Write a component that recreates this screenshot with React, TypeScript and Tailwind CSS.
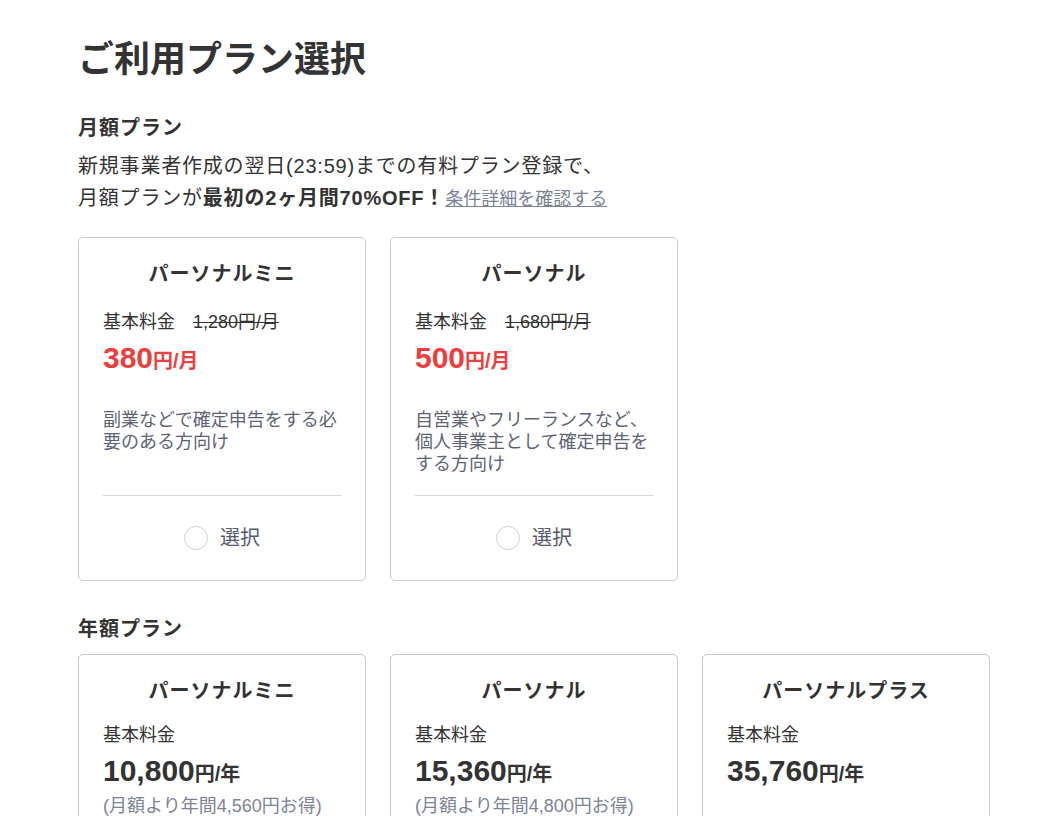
import React from 'react'

const font = { fontFamily: '"Liberation Sans", "Noto Sans CJK JP", sans-serif' }
const cjk = { fontFamily: '"Noto Sans CJK JP", sans-serif' }

interface MonthlyPlan {
  name: string
  original: string
  price: string
  description: string
}

interface YearlyPlan {
  name: string
  price: string
  saving?: string
}

const monthlyPlans: MonthlyPlan[] = [
  {
    name: 'パーソナルミニ',
    original: '1,280円/月',
    price: '380',
    description: '副業などで確定申告をする必要のある方向け'
  },
  {
    name: 'パーソナル',
    original: '1,680円/月',
    price: '500',
    description: '自営業やフリーランスなど、個人事業主として確定申告をする方向け'
  }
]

const yearlyPlans: YearlyPlan[] = [
  { name: 'パーソナルミニ', price: '10,800', saving: '(月額より年間4,560円お得)' },
  { name: 'パーソナル', price: '15,360', saving: '(月額より年間4,800円お得)' },
  { name: 'パーソナルプラス', price: '35,760' }
]

const SelectRow: React.FC = () => (
  <div className="mt-[22px] border-t border-[#d6d6de] pt-[29px] pb-[29px] flex items-center justify-center gap-3">
    <span className="w-6 h-6 rounded-full border-[1.5px] border-[#d0d1d9] bg-white" />
    <span className="text-[20px] leading-[26px] text-[#555b6e]">選択</span>
  </div>
)

const MonthlyCard: React.FC<{ plan: MonthlyPlan }> = ({ plan }) => (
  <div className="w-[288px] border border-[#c8c8d2] rounded-[5px] bg-white px-6 pt-6 flex flex-col">
    <h3 className="text-center text-[20px] leading-6 font-bold tracking-[1px] text-[#333]">{plan.name}</h3>
    <div className="mt-6 text-[18px] leading-6 text-[#333] flex">
      <span>基本料金</span>
      <span className="ml-[18px] line-through">{plan.original}</span>
    </div>
    <div className="mt-[6px] text-[#ee3d3d] font-bold leading-9">
      <span className="text-[30px]">{plan.price}</span>
      <span className="text-[20px]">円/月</span>
    </div>
    <p className="mt-[26px] flex-1 text-[18px] leading-[22px] text-[#5c6377]" style={cjk}>
      {plan.description}
    </p>
    <SelectRow />
  </div>
)

const YearlyCard: React.FC<{ plan: YearlyPlan }> = ({ plan }) => (
  <div className="w-[288px] border border-[#c8c8d2] rounded-[5px] bg-white px-6 pt-6 pb-6 flex flex-col">
    <h3 className="text-center text-[20px] leading-6 font-bold tracking-[1px] text-[#333]">{plan.name}</h3>
    <div className="mt-5 text-[18px] leading-6 text-[#333]">基本料金</div>
    <div className="mt-[6px] text-[#333] font-bold leading-9">
      <span className="text-[30px]">{plan.price}</span>
      <span className="text-[20px]">円/年</span>
    </div>
    {plan.saving && (
      <div className="text-[18px] leading-6 text-[#7c8396]">{plan.saving}</div>
    )}
    <div className="h-[120px]" />
  </div>
)

export default function App() {
  return (
    <div className="min-h-screen bg-white text-[#333] pl-[78px] pt-9 pb-10" style={font}>
      <h1 className="text-[36px] leading-[48px] font-bold">ご利用プラン選択</h1>

      <section className="mt-[30px]">
        <h2 className="text-[20px] leading-7 font-bold tracking-[1px]">月額プラン</h2>
        <p className="mt-2 text-[20px] leading-8 tracking-[0.8px]">
          新規事業者作成の翌日(23:59)までの有料プラン登録で、
          <br />
          月額プランが<span className="font-bold">最初の2ヶ月間70%OFF！</span>
          <a href="#" className="text-[18px] tracking-normal text-[#7a8297] underline">条件詳細を確認する</a>
        </p>
        <div className="mt-[22px] flex gap-6 items-stretch">
          {monthlyPlans.map((p) => (
            <MonthlyCard key={p.name} plan={p} />
          ))}
        </div>
      </section>

      <section className="mt-9">
        <h2 className="text-[20px] leading-6 font-bold tracking-[1px]">年額プラン</h2>
        <div className="mt-[13px] flex gap-6 items-stretch">
          {yearlyPlans.map((p) => (
            <YearlyCard key={p.name} plan={p} />
          ))}
        </div>
      </section>
    </div>
  )
}
